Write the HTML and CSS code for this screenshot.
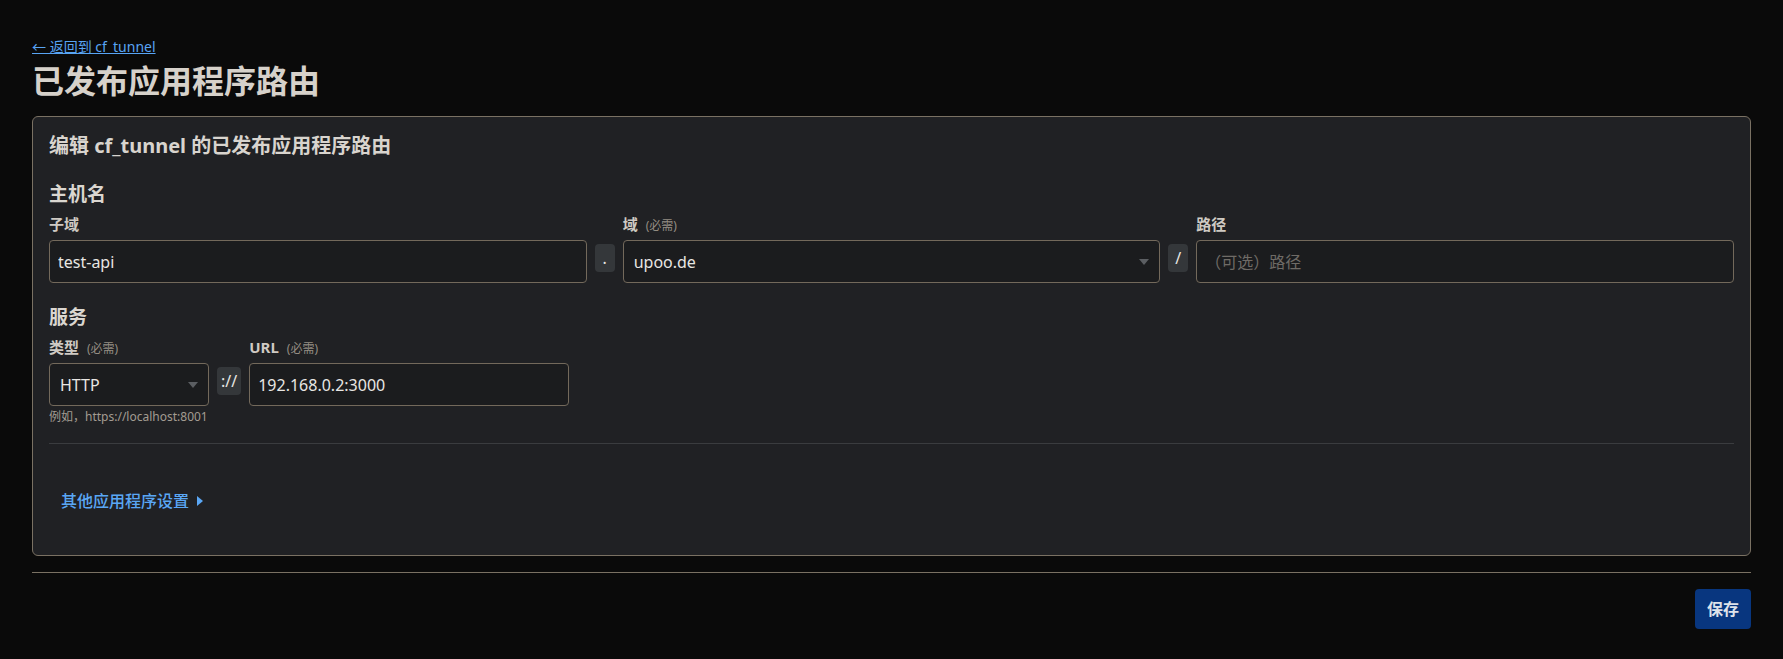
FILE: index.html
```html
<!DOCTYPE html>
<html lang="zh-CN">
<head>
    <meta charset="UTF-8">
    <meta name="viewport" content="width=device-width, initial-scale=1.0">
    <title>已发布应用程序路由</title>
    <link rel="stylesheet" href="styles.css">
</head>
<body>
    <a class="back-link" href="#">← 返回到 cf_tunnel</a>
    <h1 class="page-title">已发布应用程序路由</h1>

    <div class="card">
        <h2 class="card-title">编辑 cf_tunnel 的已发布应用程序路由</h2>

        <h3 class="section-title">主机名</h3>
        <div class="host-row">
            <div class="field">
                <label class="field-label">子域</label>
                <input class="text-input" type="text" value="test-api">
            </div>
            <span class="addon">.</span>
            <div class="field">
                <label class="field-label">域<span class="req">(必需)</span></label>
                <div class="select-wrap">
                    <select class="select-input">
                        <option>upoo.de</option>
                    </select>
                </div>
            </div>
            <span class="addon">/</span>
            <div class="field">
                <label class="field-label">路径</label>
                <input class="text-input" type="text" placeholder="（可选）路径">
            </div>
        </div>

        <h3 class="section-title service-title">服务</h3>
        <div class="service-row">
            <div class="field">
                <label class="field-label">类型<span class="req">(必需)</span></label>
                <div class="select-wrap">
                    <select class="select-input">
                        <option>HTTP</option>
                        <option>HTTPS</option>
                    </select>
                </div>
                <div class="hint">例如，https://localhost:8001</div>
            </div>
            <span class="addon">://</span>
            <div class="field">
                <label class="field-label">URL<span class="req">(必需)</span></label>
                <input class="text-input" type="text" value="192.168.0.2:3000">
            </div>
        </div>

        <div class="divider"></div>

        <div class="more">
            <a class="more-link" href="#">其他应用程序设置</a>
        </div>
    </div>

    <div class="footer-line"></div>
    <div class="actions">
        <button class="save-button">保存</button>
    </div>
</body>
</html>
```

FILE: styles.css
```css
body {
    margin: 0;
    padding: 37px 32px 32px;
    background: #0a0a0a;
    color: #e8e6e3;
    font-family: "Noto Sans", "Noto Sans CJK SC", sans-serif;
}
.back-link {
    display: block;
    width: max-content;
    font-size: 14px;
    line-height: 20px;
    color: #58a4f4;
    text-decoration: underline;
}
.page-title {
    margin: 5px 0 16px;
    font-size: 32px;
    line-height: 38px;
    font-weight: 700;
    color: #d6d1ca;
}
.card {
    background: #202124;
    border: 1px solid #7a7163;
    border-radius: 6px;
    padding: 15px 16px 16px;
}
.card-title {
    margin: 0 0 21px;
    font-size: 20px;
    line-height: 28px;
    font-weight: 700;
    color: #d8d4ce;
}
.section-title {
    margin: 0 0 7px;
    font-size: 19px;
    line-height: 26px;
    font-weight: 700;
    color: #dad6d0;
}
.service-title {
    margin-top: 21px;
}
.host-row {
    display: grid;
    grid-template-columns: 1fr auto 1fr auto 1fr;
    column-gap: 8px;
    align-items: start;
}
.service-row {
    display: grid;
    grid-template-columns: 160px auto 320px;
    justify-content: start;
    column-gap: 8px;
    align-items: start;
}
.field {
    display: flex;
    flex-direction: column;
    min-width: 0;
}
.field-label {
    height: 20px;
    margin-bottom: 6px;
    font-size: 15px;
    line-height: 20px;
    font-weight: 700;
    color: #cfcac3;
}
.req {
    margin-left: 8px;
    font-size: 12px;
    line-height: 12px;
    font-weight: 400;
    color: #948d83;
}
.text-input,
.select-input {
    display: block;
    box-sizing: border-box;
    width: 100%;
    height: 43px;
    margin: 0;
    background: #1b1c1e;
    border: 1px solid #73695b;
    border-radius: 4px;
    color: #e8e6e3;
    font-family: inherit;
    font-size: 16px;
    outline: none;
}
.text-input {
    padding: 0 8px;
}
.text-input::placeholder {
    color: #6f6b66;
}
.select-wrap {
    position: relative;
}
.select-input {
    appearance: none;
    -webkit-appearance: none;
    padding: 0 28px 0 10px;
}
.select-wrap::after {
    content: "";
    position: absolute;
    right: 11px;
    top: 19px;
    border-left: 5px solid transparent;
    border-right: 5px solid transparent;
    border-top: 6px solid #5b5e62;
    pointer-events: none;
}
.addon {
    box-sizing: border-box;
    min-width: 20px;
    height: 28px;
    margin-top: 30px;
    padding: 0 4px;
    background: #34373a;
    border-radius: 4px;
    color: #e8e6e3;
    font-size: 16px;
    line-height: 28px;
    text-align: center;
}
.hint {
    height: 16px;
    margin-top: 3px;
    font-size: 12px;
    line-height: 16px;
    color: #a39c92;
    white-space: nowrap;
}
.divider {
    margin-top: 18px;
    border-top: 1px solid #3a3c3f;
}
.more {
    padding: 46px 12px 27px;
}
.more-link {
    display: inline-flex;
    align-items: center;
    gap: 8px;
    font-size: 16px;
    line-height: 22px;
    font-weight: 500;
    color: #5aa7f5;
    text-decoration: none;
}
.more-link::after {
    content: "";
    border-left: 6px solid #5aa7f5;
    border-top: 5px solid transparent;
    border-bottom: 5px solid transparent;
}
.footer-line {
    margin: 16px 0;
    border-top: 1px solid #7a7163;
}
.actions {
    display: flex;
    justify-content: flex-end;
}
.save-button {
    padding: 8px 12px;
    background: #08367f;
    border: none;
    border-radius: 4px;
    color: #dde2ea;
    font-family: inherit;
    font-size: 16px;
    line-height: 24px;
    font-weight: 700;
    cursor: pointer;
}
```
